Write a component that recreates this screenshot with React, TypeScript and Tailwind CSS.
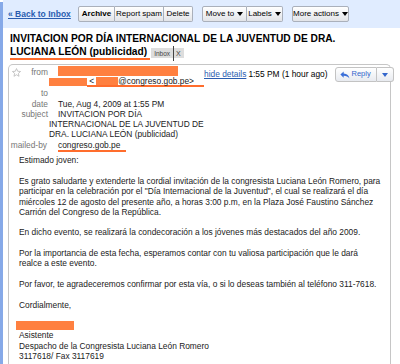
import React from 'react'

const Btn = ({ children, className = '' }: { children: React.ReactNode; className?: string }) => (
  <div
    className={`h-[16px] flex items-center justify-center border border-[#aab0bb] bg-gradient-to-b from-white to-[#e2e4e8] text-[8px] text-black whitespace-nowrap ${className}`}
  >
    {children}
  </div>
)

const Caret = ({ className = 'ml-[3px]' }: { className?: string }) => (
  <svg width="6" height="4" viewBox="0 0 6 4" className={className}>
    <path d="M0 0 H6 L3 4 Z" fill="currentColor" />
  </svg>
)

const Bar = ({ className = '' }: { className?: string }) => (
  <span className={`inline-block bg-[#ff8040] align-middle ${className}`} />
)

export default function App() {
  return (
    <div className="w-[400px] h-[364px] overflow-hidden flex bg-white text-black font-['Liberation_Sans',Arial,sans-serif]">
      {/* left frame strip */}
      <div className="w-[3px] shrink-0 bg-[#86a9e8] mt-[2px]" />

      <div className="flex-1 min-w-0 flex flex-col">
        {/* Toolbar */}
        <div className="h-[28px] shrink-0 bg-[#e0ecff] flex items-center pl-[5px]">
          <a className="w-[70px] text-[8.5px] font-bold text-[#2a5db0] underline whitespace-nowrap">« Back to Inbox</a>
          <div className="flex">
            <Btn className="w-[37px] font-bold rounded-l-[2px]">Archive</Btn>
            <Btn className="w-[49px] border-l-0">Report spam</Btn>
            <Btn className="w-[29px] border-l-0 rounded-r-[2px]">Delete</Btn>
          </div>
          <div className="flex ml-[9px]">
            <Btn className="w-[45px] rounded-l-[2px]">
              Move to <Caret />
            </Btn>
            <Btn className="w-[36px] border-l-0 rounded-r-[2px]">
              Labels <Caret />
            </Btn>
          </div>
          <Btn className="w-[57px] ml-[9px] rounded-[2px]">
            More actions <Caret />
          </Btn>
        </div>

        {/* Subject title */}
        <div className="mt-[3px] pl-[7px] pr-[4px] text-[10.2px] leading-[15px] font-bold">
          <div className="whitespace-nowrap">INVITACION POR DÍA INTERNACIONAL DE LA JUVENTUD DE DRA.</div>
          <div className="flex items-center">
            <span className="border-b-2 border-[#ff6d2d] pr-[3px] leading-[12px]">LUCIANA LEÓN (publicidad)</span>
            <span className="ml-[1px] flex items-center bg-[#dddddd] h-[10px] px-[3px] text-[6.5px] font-normal text-[#444]">
              Inbox
              <span className="ml-[3px] pl-[2px] border-l border-[#444] text-[7px]">X</span>
            </span>
          </div>
        </div>

        {/* Message card */}
        <div className="mt-[4px] ml-[5px] mr-[9px] flex-1 border border-b-0 border-[#c6c6c6] rounded-t-[5px] text-[8.4px]">
          <div className="pt-[2px] leading-[10.2px]">
            {/* from row */}
            <div className="flex items-start">
              <div className="flex w-[40px] pl-[3px] pr-[1px] justify-between items-start shrink-0">
                <svg width="9" height="9" viewBox="0 0 10 10" className="mt-[1px]">
                  <path
                    d="M5 0.6 L6.3 3.6 L9.5 3.9 L7.1 6 L7.8 9.2 L5 7.5 L2.2 9.2 L2.9 6 L0.5 3.9 L3.7 3.6 Z"
                    fill="none"
                    stroke="#b9b9b9"
                    strokeWidth="0.9"
                  />
                </svg>
                <span className="text-[#777]">from</span>
              </div>
              <div className="w-[155px] shrink-0">
                <div className="h-[10.2px] pl-[9px] flex items-start">
                  <Bar className="w-[120px] h-[10px] -mt-[1px]" />
                </div>
                <div className="h-[10.2px] flex items-center whitespace-nowrap">
                  <Bar className="w-[39px] h-[8px]" />
                  <span className="flex items-center border-b-2 border-[#ff6d2d] pr-[10px] h-[10px] text-[#222]">
                    <span className="ml-[2px]">&lt;</span>
                    <Bar className="w-[22px] h-[8px] ml-[2px]" />
                    <span>@congreso.gob.pe&gt;</span>
                  </span>
                </div>
              </div>
              <div className="ml-auto flex items-start">
                <a className="mt-[2px] text-[#2a5db0] underline whitespace-nowrap">hide details</a>
                <span className="mt-[2px] ml-[2px] whitespace-nowrap">1:55 PM (1 hour ago)</span>
                <div className="ml-[7px] flex">
                  <div className="w-[42px] h-[15px] flex items-center pl-[4px] border border-[#c3c3c3] rounded-l-[3px] bg-gradient-to-b from-white to-[#e8ebf0] text-[#3366cc] text-[7.5px]">
                    <svg width="10" height="8" viewBox="0 0 11 9">
                      <path d="M4 0.5 L0.3 4 L4 7.5 V5.3 C7 5.3 9 6.2 10.5 8.5 C10 5 8 2.9 4 2.7 Z" fill="#3a6fd8" />
                    </svg>
                    <span className="ml-[2px]">Reply</span>
                  </div>
                  <div className="w-[17px] h-[15px] flex items-center justify-center border border-l-0 border-[#c3c3c3] rounded-r-[3px] bg-gradient-to-b from-white to-[#e8ebf0] text-[#3366cc]">
                    <Caret className="" />
                  </div>
                </div>
              </div>
            </div>

            {/* to */}
            <div className="flex mt-[1px]">
              <div className="w-[40px] pr-[1px] text-right text-[#777] shrink-0">to</div>
            </div>
            {/* date */}
            <div className="flex">
              <div className="w-[40px] pr-[1px] text-right text-[#777] shrink-0">date</div>
              <div className="pl-[9px] text-[#222]">Tue, Aug 4, 2009 at 1:55 PM</div>
            </div>
            {/* subject */}
            <div className="flex">
              <div className="w-[40px] pr-[1px] text-right text-[#777] shrink-0">subject</div>
              <div className="w-[160px] text-[#222] indent-[9px]">
                INVITACION POR DÍA
                <br />
                INTERNACIONAL DE LA JUVENTUD DE
                <br />
                DRA. LUCIANA LEÓN (publicidad)
              </div>
            </div>
            {/* mailed-by */}
            <div className="flex mt-[1px]">
              <div className="w-[40px] pr-[2px] text-right text-[#777] shrink-0 whitespace-nowrap">mailed-by</div>
              <div className="pl-[9px]">
                <span className="inline-block border-b-2 border-[#ff6d2d] pr-[6px] leading-[9px] text-[#222]">
                  congreso.gob.pe
                </span>
              </div>
            </div>
          </div>

          {/* Body */}
          <div className="mt-[3px] px-[10px] leading-[10.3px] text-[#222] whitespace-nowrap">
            <p>Estimado joven:</p>
            <p className="mt-[10.3px]">
              Es grato saludarte y extenderte la cordial invitación de la congresista Luciana León Romero, para
              <br />
              participar en la celebración por el "Día Internacional de la Juventud", el cual se realizará el día
              <br />
              miércoles 12 de agosto del presente año, a horas 3:00 p.m, en la Plaza José Faustino Sánchez
              <br />
              Carrión del Congreso de la República.
            </p>
            <p className="mt-[10.3px]">
              En dicho evento, se realizará la condecoración a los jóvenes más destacados del año 2009.
            </p>
            <p className="mt-[10.3px]">
              Por la importancia de esta fecha, esperamos contar con tu valiosa participación que le dará
              <br />
              realce a este evento.
            </p>
            <p className="mt-[10.3px]">
              Por favor, te agradeceremos confirmar por esta vía, o si lo deseas también al teléfono 311-7618.
            </p>
            <p className="mt-[10.3px]">Cordialmente,</p>
            <div className="mt-[10.3px] h-[10.3px] flex items-center -ml-[3px]">
              <Bar className="w-[58px] h-[9px]" />
            </div>
            <p>Asistente</p>
            <p>Despacho de la Congresista Luciana León Romero</p>
            <p>3117618/ Fax 3117619</p>
          </div>
        </div>
      </div>
    </div>
  )
}
